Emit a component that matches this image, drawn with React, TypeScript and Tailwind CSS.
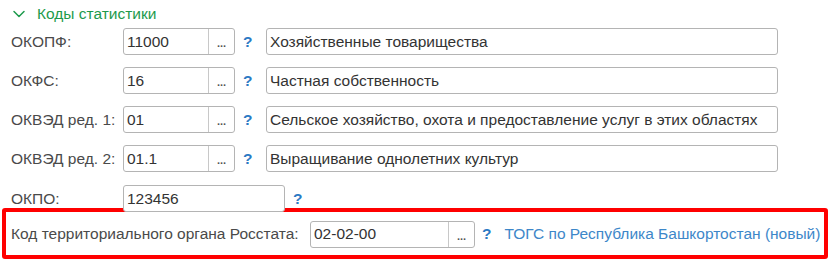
import { ChevronDown } from 'lucide-react';

const FONT = { fontFamily: '"Liberation Sans", Arial, sans-serif' };

type Row = { label: string; code: string; name?: string; noPick?: boolean };

const ROWS: Row[] = [
  { label: 'ОКОПФ:', code: '11000', name: 'Хозяйственные товарищества' },
  { label: 'ОКФС:', code: '16', name: 'Частная собственность' },
  { label: 'ОКВЭД ред. 1:', code: '01', name: 'Сельское хозяйство, охота и предоставление услуг в этих областях' },
  { label: 'ОКВЭД ред. 2:', code: '01.1', name: 'Выращивание однолетних культур' },
  { label: 'ОКПО:', code: '123456', noPick: true },
];

function CodeInput({ value, width, noPick }: { value: string; width: string; noPick?: boolean }) {
  return (
    <div className={`${width} h-[27px] flex border border-[#b4b4b4] rounded-[3px] bg-white`}>
      <div className="flex-1 px-[3px] flex items-center text-[15.5px] text-[#333]">{value}</div>
      {!noPick && (
        <div className="w-[26px] border-l border-[#c8c8c8] flex items-end justify-center pb-[5px] text-[11px] leading-none text-[#555] font-bold">
          ...
        </div>
      )}
    </div>
  );
}

function Help() {
  return <span className="text-[15.5px] font-bold text-[#2b7ac4] leading-none">?</span>;
}

export default function App() {
  return (
    <div style={FONT} className="w-[835px] h-[261px] bg-white overflow-hidden">
      {/* Header */}
      <div className="flex items-center h-[27px] pl-[9px] pt-[1px]">
        <ChevronDown className="w-[20px] h-[20px] text-[#1d9a4c]" strokeWidth={1.8} />
        <span className="ml-[8px] text-[15.5px] text-[#1d9a4c]">Коды статистики</span>
      </div>

      <div className="pl-[11px]">
        {ROWS.map((row, i) => (
          <div key={row.label} className={`flex items-center h-[27px] ${i === 0 ? 'mt-[1px]' : i === 4 ? 'mt-[13px]' : 'mt-[12px]'}`}>
            <div className="w-[112px] text-[15.5px] text-[#4a4a4a]">{row.label}</div>
            <CodeInput value={row.code} width={row.noPick ? 'w-[162px]' : 'w-[112px]'} noPick={row.noPick} />
            <div className="ml-[8px] w-[23px]">
              <Help />
            </div>
            {row.name && (
              <div className="w-[512px] h-[27px] border border-[#b4b4b4] rounded-[3px] px-[3px] flex items-center text-[15.5px] text-[#333] whitespace-nowrap overflow-hidden">
                {row.name}
              </div>
            )}
          </div>
        ))}
      </div>

      {/* Highlighted */}
      <div className="ml-[2px] mt-[-4px] w-[826px] h-[51px] border-4 border-[#ff0000] rounded-[3px] flex items-center pl-[5px]">
        <div className="w-[299px] text-[15.5px] text-[#4a4a4a] whitespace-nowrap">Код территориального органа Росстата:</div>
        <div className="mt-[1px]">
          <CodeInput value="02-02-00" width="w-[165px]" />
        </div>
        <div className="ml-[7px]">
          <Help />
        </div>
        <a className="ml-[13px] text-[15.5px] text-[#3d87c9] whitespace-nowrap">ТОГС по Республика Башкортостан (новый)</a>
      </div>
    </div>
  );
}
